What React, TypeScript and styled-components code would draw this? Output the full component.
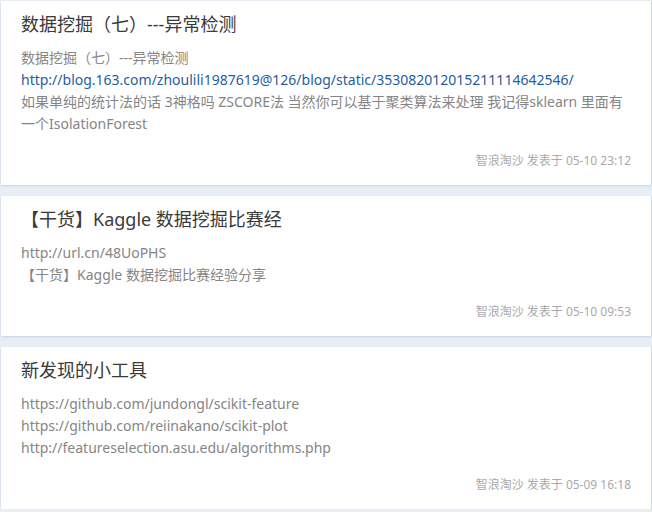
import React from "react";
import styled, { createGlobalStyle } from "styled-components";

const GlobalStyle = createGlobalStyle`
  html, body {
    margin: 0;
    padding: 0;
    background: #e8eef6;
  }
  body {
    font-family: "Noto Sans", "Noto Sans CJK SC", sans-serif;
  }
`;

const List = styled.div`
  display: flex;
  flex-direction: column;
  gap: 11px;
  padding: 1px 1px 0 1px;
`;

const Card = styled.article`
  background: #ffffff;
  padding: 11px 20px 14px 20px;
  box-shadow: 0 1px 2px rgba(140, 160, 190, 0.35), 1px 0 0 #d6dbe2;
  display: flex;
  flex-direction: column;
`;

const Title = styled.h2`
  margin: 0 0 11px 0;
  font-size: 18px;
  line-height: 24px;
  font-weight: 400;
  color: #3a3a3a;
`;

const Body = styled.div`
  font-size: 14px;
  line-height: 22px;
  color: #858585;
`;

const Line = styled.div<{ $link?: boolean }>`
  color: ${(p) => (p.$link ? "#1f5e9f" : "inherit")};
`;

const Footer = styled.div`
  margin-top: 16px;
  text-align: right;
  font-size: 12px;
  line-height: 20px;
  color: #aaaaaa;
`;

type Post = {
  title: string;
  lines: { text: string; link?: boolean }[];
  footer: string;
};

const posts: Post[] = [
  {
    title: "数据挖掘（七）---异常检测",
    lines: [
      { text: "数据挖掘（七）---异常检测" },
      {
        text: "http://blog.163.com/zhoulili1987619@126/blog/static/353082012015211114642546/",
        link: true,
      },
      {
        text: "如果单纯的统计法的话 3神格吗 ZSCORE法 当然你可以基于聚类算法来处理 我记得sklearn 里面有一个IsolationForest",
      },
    ],
    footer: "智浪淘沙 发表于 05-10 23:12",
  },
  {
    title: "【干货】Kaggle 数据挖掘比赛经",
    lines: [
      { text: "http://url.cn/48UoPHS" },
      { text: "【干货】Kaggle 数据挖掘比赛经验分享" },
    ],
    footer: "智浪淘沙 发表于 05-10 09:53",
  },
  {
    title: "新发现的小工具",
    lines: [
      { text: "https://github.com/jundongl/scikit-feature" },
      { text: "https://github.com/reiinakano/scikit-plot" },
      { text: "http://featureselection.asu.edu/algorithms.php" },
    ],
    footer: "智浪淘沙 发表于 05-09 16:18",
  },
];

export default function App() {
  return (
    <>
      <GlobalStyle />
      <List>
        {posts.map((p, i) => (
          <Card key={i}>
            <Title>{p.title}</Title>
            <Body>
              {p.lines.map((l, j) => (
                <Line key={j} $link={l.link}>
                  {l.text}
                </Line>
              ))}
            </Body>
            <Footer>{p.footer}</Footer>
          </Card>
        ))}
      </List>
    </>
  );
}
